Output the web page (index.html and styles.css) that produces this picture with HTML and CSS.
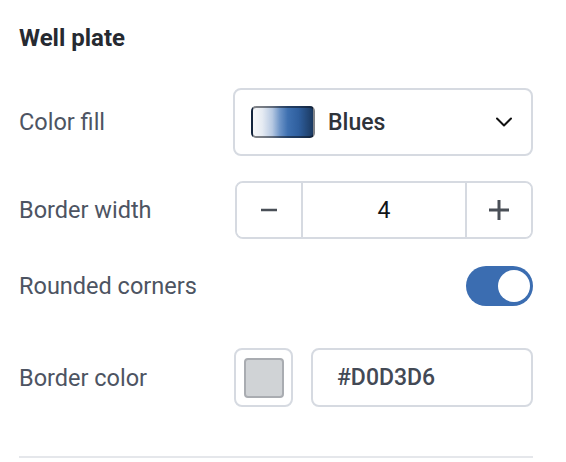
FILE: index.html
```html
<!DOCTYPE html>
<html lang="en">
<head>
<meta charset="utf-8">
<title>Well plate</title>
<link rel="stylesheet" href="styles.css">
</head>
<body>
<div class="panel">
  <h2 class="title">Well plate</h2>

  <div class="row row-fill">
    <span class="label">Color fill</span>
    <div class="select">
      <span class="gradient"></span>
      <span class="select-text">Blues</span>
      <svg class="chevron" width="16" height="10" viewBox="0 0 16 10"><path d="M1 1.5 L8 8.5 L15 1.5" fill="none" stroke="#111" stroke-width="2" stroke-linecap="round" stroke-linejoin="round"/></svg>
    </div>
  </div>

  <div class="row row-width">
    <span class="label">Border width</span>
    <div class="stepper">
      <button class="step-btn" type="button">
        <svg width="18" height="18" viewBox="0 0 18 18"><path d="M1 9 H17" stroke="#4a4f57" stroke-width="2.6"/></svg>
      </button>
      <div class="step-value">4</div>
      <button class="step-btn" type="button">
        <svg width="20" height="20" viewBox="0 0 20 20"><path d="M0 10 H20 M10 0 V20" stroke="#4a4f57" stroke-width="3"/></svg>
      </button>
    </div>
  </div>

  <div class="row row-rounded">
    <span class="label">Rounded corners</span>
    <div class="toggle"><span class="knob"></span></div>
  </div>

  <div class="row row-color">
    <span class="label">Border color</span>
    <div class="color-controls">
      <div class="swatch-btn"><span class="swatch"></span></div>
      <div class="hex-input">#D0D3D6</div>
    </div>
  </div>

  <div class="divider"></div>
</div>
</body>
</html>
```

FILE: styles.css
```css
html, body {
  margin: 0;
  padding: 0;
  background: #ffffff;
}

body {
  font-family: Roboto, "Liberation Sans", Arial, sans-serif;
}

.panel {
  width: 566px;
  box-sizing: border-box;
  padding: 24px 33px 0 19px;
  display: flex;
  flex-direction: column;
}

.title {
  margin: 0;
  font-size: 24px;
  line-height: 28px;
  font-weight: 700;
  color: #262a31;
}

.row {
  display: flex;
  align-items: center;
  justify-content: space-between;
}

.row-fill { margin-top: 36px; }
.row-width { margin-top: 25px; }
.row-rounded { margin-top: 27px; }
.row-color { margin-top: 42px; }

.label {
  font-size: 23.5px;
  color: #4d5462;
}

.select {
  width: 300px;
  height: 68px;
  box-sizing: border-box;
  border: 2px solid #d6dae1;
  border-radius: 8px;
  display: flex;
  align-items: center;
  padding: 0 19px 0 16px;
}

.gradient {
  width: 64px;
  height: 32px;
  box-sizing: border-box;
  border-radius: 5px;
  border: 2px solid rgba(10, 14, 22, 0.5);
  background: linear-gradient(to right, #f6f7f9 0%, #e7ecf3 15%, #b7c9e2 32%, #6d94c7 45%, #3e70b0 58%, #2f5f9e 76%, #1b3960 100%);
}

.select-text {
  margin-left: 13px;
  font-size: 23px;
  font-weight: 500;
  color: #2e333a;
  flex: 1;
}

.chevron {
  display: block;
}

.stepper {
  width: 298px;
  height: 58px;
  box-sizing: border-box;
  border: 2px solid #d6dae1;
  border-radius: 8px;
  display: flex;
  overflow: hidden;
}

.step-btn {
  width: 64px;
  border: 0;
  padding: 0;
  margin: 0;
  background: #ffffff;
  display: flex;
  align-items: center;
  justify-content: center;
}

.step-value {
  flex: 1;
  border-left: 2px solid #d6dae1;
  border-right: 2px solid #d6dae1;
  display: flex;
  align-items: center;
  justify-content: center;
  font-size: 23px;
  color: #111418;
}

.toggle {
  width: 67px;
  height: 40px;
  border-radius: 20px;
  background: #3b6db1;
  box-sizing: border-box;
  padding: 4px 3px;
  display: flex;
  justify-content: flex-end;
}

.knob {
  width: 32px;
  height: 32px;
  border-radius: 50%;
  background: #ffffff;
}

.color-controls {
  display: flex;
  gap: 18px;
}

.swatch-btn {
  width: 59px;
  height: 59px;
  box-sizing: border-box;
  border: 2px solid #d6dae1;
  border-radius: 8px;
  display: flex;
  align-items: center;
  justify-content: center;
}

.swatch {
  width: 40px;
  height: 40px;
  box-sizing: border-box;
  border: 2px solid #a9acb1;
  border-radius: 4px;
  background: #d0d3d6;
}

.hex-input {
  width: 222px;
  height: 59px;
  box-sizing: border-box;
  border: 2px solid #d6dae1;
  border-radius: 8px;
  display: flex;
  align-items: center;
  padding-left: 24px;
  font-size: 23px;
  font-weight: 500;
  color: #434955;
}

.divider {
  margin-top: 49px;
  height: 2px;
  background: #e5e7eb;
}
```
